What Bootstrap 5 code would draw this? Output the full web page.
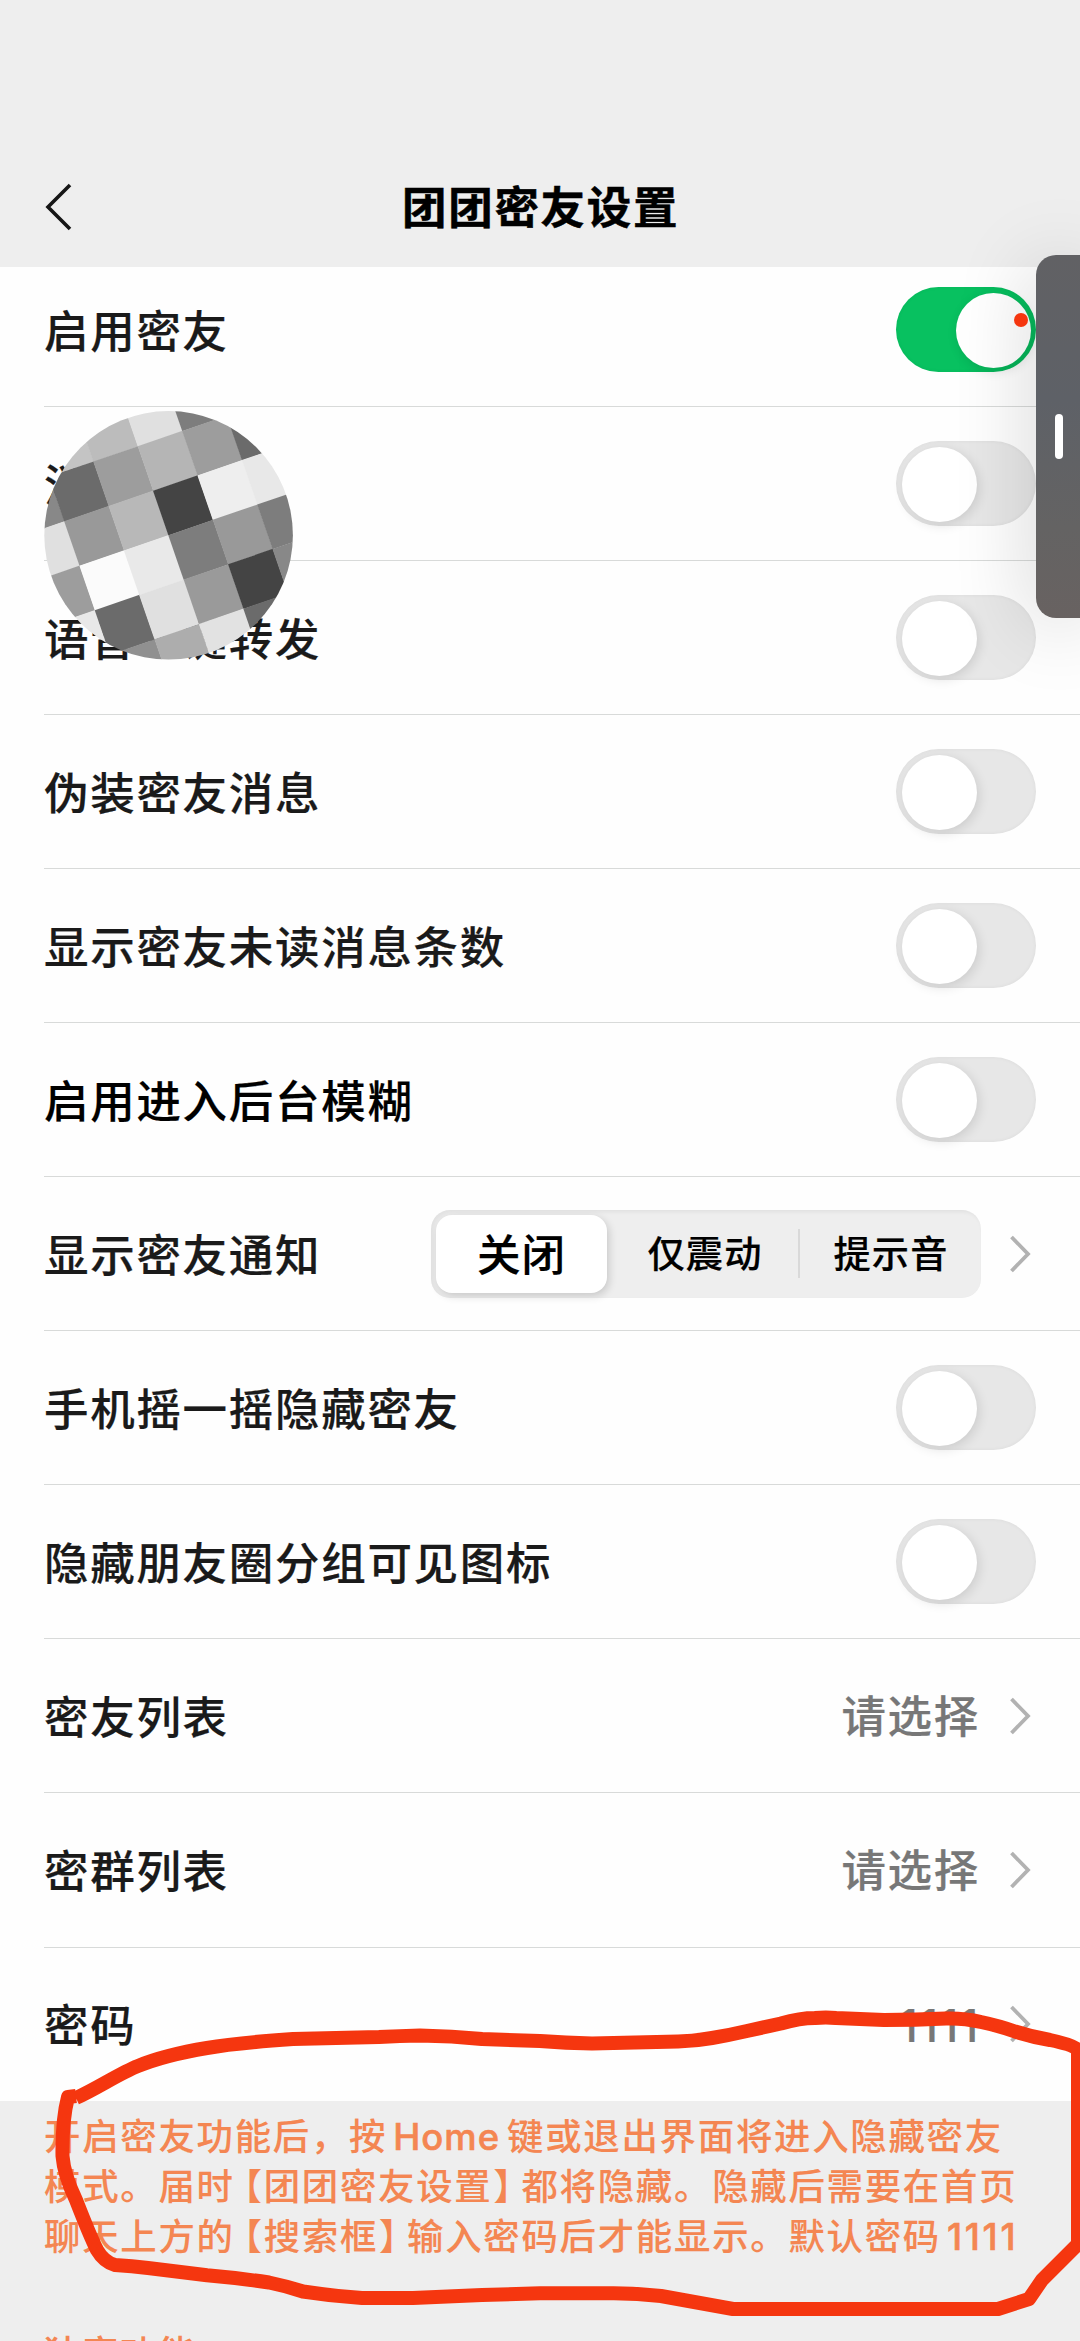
<!DOCTYPE html>
<html lang="zh-CN">
<head>
<meta charset="utf-8">
<meta name="viewport" content="width=device-width, initial-scale=1">
<title>团团密友设置</title>
<link href="https://cdn.jsdelivr.net/npm/bootstrap@5.3.0/dist/css/bootstrap.min.css" rel="stylesheet">
<style>
body{font-family:Inter,"Noto Sans CJK SC",sans-serif;background:#eee;color:#1a1a1a}
.screen{width:1080px;height:2341px;background:#eee}
.topbar{height:267px;background:#eee;padding:148px 44px 0;z-index:1}
.topbar h1{font-size:44.5px;letter-spacing:1.7px;font-weight:700;color:#000;line-height:121px;padding-left:330px;-webkit-text-stroke:.5px}
.topbar .back{margin-top:35px}
.settings{margin-top:-14px;padding-left:44px;background:#fefefe;height:1848px}
.setting{height:154.05px;padding-right:44px;border-bottom:1.5px solid #d8dad9;font-size:44.5px;letter-spacing:1.7px;line-height:60px;font-weight:500;-webkit-text-stroke:.2px}
.setting:last-child{border-color:transparent}
.setting>span:first-child{padding-top:4px}
.pick{color:#777;padding:3px 6px 0 0}
.toggle{width:140px;height:85px;border-radius:43px;background:#e7e7e7;padding:5.5px;box-shadow:inset 0 0 4px rgba(0,0,0,.05)}
.toggle i{width:75px;height:75px;border-radius:50%;background:#fff;box-shadow:2px 3px 12px rgba(0,0,0,.12)}
.toggle.on{background:#08c160;justify-content:flex-end}
.seg{width:550px;height:88px;border-radius:19px;background:#eee;padding:5px;margin-right:29px;box-shadow:inset 2px 2px 4px rgba(0,0,0,.06);font-size:37.2px;letter-spacing:1.1px;color:#000}
.seg .chosen{width:171px;height:78px;border-radius:16px;background:#fff;box-shadow:2px 3px 8px rgba(0,0,0,.16);font-size:43.5px;letter-spacing:1px;padding-top:3px}
.seg .rule{width:2px;height:49px;background:#d9d9d9}
.seg .opt{padding-top:2px}
.seg .vib{width:191px;padding-left:5px}
.seg .snd{width:176px;padding-left:6px}
.tip{padding:11px 0 0 44px;color:#f48652;font-size:36.4px;letter-spacing:1.75px;line-height:50px;font-weight:500;-webkit-text-stroke:.1px}
.tip div{white-space:nowrap}
.tip .lb,.tip .rb{font-feature-settings:"halt"}
.tip .lb{margin-left:9px}
.tip .rb{margin-left:1px;margin-right:8px}
.tip .latin{margin:0 7px 0 6px;letter-spacing:1px;-webkit-text-stroke:.6px}
.tip .digits{margin-left:6px;letter-spacing:2.7px;-webkit-text-stroke:.6px}
.next{padding:67px 0 0 44px}
.drawer{left:1036px;top:254.500px;width:44px;height:363px;border-radius:20px 0 0 20px;background:linear-gradient(#616164,#5e6167 40%,#646363 75%,#686261);box-shadow:0 8px 80px rgba(0,0,0,.2);padding-left:19px;z-index:2}
.drawer i{width:8px;height:45px;border-radius:4px;background:#fff;margin-top:1px}
.overlay{z-index:3;pointer-events:none}
</style>
</head>
<body>
<main class="screen position-relative overflow-hidden">
<header class="topbar position-relative d-flex align-items-start">
<svg class="back" width="28" height="48" viewBox="0 0 28 48" fill="none" stroke="#161616" stroke-width="3.6"><path d="M26 2 4 24 26 46"/></svg>
<h1 class="m-0">团团密友设置</h1>
</header>
<section class="settings">
<div class="setting d-flex align-items-center justify-content-between"><span>启用密友</span><span class="toggle on d-flex"><i></i></span></div>
<div class="setting d-flex align-items-center justify-content-between"><span>消</span><span class="toggle d-flex"><i></i></span></div>
<div class="setting d-flex align-items-center justify-content-between"><span>语音一键转发</span><span class="toggle d-flex"><i></i></span></div>
<div class="setting d-flex align-items-center justify-content-between"><span>伪装密友消息</span><span class="toggle d-flex"><i></i></span></div>
<div class="setting d-flex align-items-center justify-content-between"><span>显示密友未读消息条数</span><span class="toggle d-flex"><i></i></span></div>
<div class="setting d-flex align-items-center justify-content-between"><span class="text-black">启用进入后台模糊</span><span class="toggle d-flex"><i></i></span></div>
<div class="setting d-flex align-items-center"><span class="me-auto">显示密友通知</span>
<div class="seg d-flex align-items-center"><span class="chosen d-flex align-items-center justify-content-center">关闭</span><span class="opt vib text-center">仅震动</span><span class="rule"></span><span class="opt snd text-center">提示音</span></div>
<svg class="me-1" width="22" height="40" viewBox="0 0 22 40" fill="none" stroke="#b2b2b2" stroke-width="3.8"><path d="M1.500 3 18 20 1.500 37"/></svg></div>
<div class="setting d-flex align-items-center justify-content-between"><span>手机摇一摇隐藏密友</span><span class="toggle d-flex"><i></i></span></div>
<div class="setting d-flex align-items-center justify-content-between"><span>隐藏朋友圈分组可见图标</span><span class="toggle d-flex"><i></i></span></div>
<div class="setting d-flex align-items-center"><span class="me-auto">密友列表</span><span class="pick me-4">请选择</span><svg class="me-1" width="22" height="40" viewBox="0 0 22 40" fill="none" stroke="#b2b2b2" stroke-width="3.8"><path d="M1.500 3 18 20 1.500 37"/></svg></div>
<div class="setting d-flex align-items-center"><span class="me-auto">密群列表</span><span class="pick me-4">请选择</span><svg class="me-1" width="22" height="40" viewBox="0 0 22 40" fill="none" stroke="#b2b2b2" stroke-width="3.8"><path d="M1.500 3 18 20 1.500 37"/></svg></div>
<div class="setting d-flex align-items-center"><span class="me-auto">密码</span><span class="pick me-4">1111</span><svg class="me-1" width="22" height="40" viewBox="0 0 22 40" fill="none" stroke="#b2b2b2" stroke-width="3.8"><path d="M1.500 3 18 20 1.500 37"/></svg></div>
</section>
<section class="tip">
<div>开启密友功能后，按<span class="latin">Home</span>键或退出界面将进入隐藏密友</div>
<div>模式。届时<span class="lb">【</span>团团密友设置<span class="rb">】</span>都将隐藏。隐藏后需要在首页</div>
<div>聊天上方的<span class="lb">【</span>搜索框<span class="rb">】</span>输入密码后才能显示。默认密码<span class="digits">1111</span></div>
</section>
<section class="tip next"><div>独家功能</div></section>
<aside class="drawer position-absolute d-flex align-items-start flex-column justify-content-center"><i></i></aside>
<svg class="overlay position-absolute top-0 start-0" width="1080" height="2341" viewBox="0 0 1080 2341">
<defs><clipPath id="face"><circle cx="168.6" cy="535.3" r="124.3"/></clipPath></defs>
<g clip-path="url(#face)"><g id="mosaic" transform="translate(153 490.7) rotate(-19)"></g></g>
<circle cx="1021" cy="320" r="7" fill="#f5360f"/>
<path fill="none" stroke="#f5360f" stroke-width="14" stroke-linejoin="round" d="M76 2098C98 2088 120 2073 138 2066C160 2057 183 2052 207 2048C235 2043 264 2041 293 2039L379 2037Q400 2036 420 2035.500Q452 2036 482 2039L540 2041Q566 2043 592 2043.500L678 2041.500Q695 2041 712 2038Q730 2035 747 2031L781 2023.500Q800 2018 815 2018Q826 2017 836 2018L884 2020Q916 2020 946 2018.500Q964 2018 981 2022Q1000 2026 1015 2031.500Q1032 2037 1050 2040Q1074 2045 1078 2050L1078 2244L1042 2280L1029 2299L998 2309H733L661 2296Q635 2293 609 2293.300H540L482 2295L413 2298H362Q332 2296 303 2291.500Q286 2286 269 2282.500Q238 2278 207 2275.300L148 2268Q132 2266 115 2265Q104 2262 97 2250C90 2236 83 2218 76 2200Q64 2175 62.500 2156Q62 2120 68 2097L76 2096"/>
</svg>
</main>
<script src="https://cdn.jsdelivr.net/npm/bootstrap@5.3.0/dist/js/bootstrap.bundle.min.js"></script>
<script>
/* Grey tiles of the avatar mask, one string per row, columns -3 to 2 */
const tiles=[
['#c4c4c4','#c4c4c4','#bcbcbc','#e0e0e0','#7d7d7d','#6b6b6b'],
['#888','#6b6b6b','#9d9d9d','#b5b5b5','#9d9d9d','#6b6b6b'],
['#e0e0e0','#999','#b8b8b8','#444','#eee','#e8e8e8'],
['#9d9d9d','#fbfbfb','#e9e9e9','#7d7d7d','#999','#7d7d7d'],
['#e8e8e8','#6b6b6b','#e0e0e0','#9a9a9a','#444','#888'],
['#909090','#909090','#adadad','#e2e2e2','#6b6b6b','#6b6b6b']];
const g=document.getElementById('mosaic'),s=47;
tiles.forEach((row,j)=>row.forEach((c,i)=>{
const r=document.createElementNS('http://www.w3.org/2000/svg','rect');
r.setAttribute('x',(i-3)*s);r.setAttribute('y',(j-2)*s);
r.setAttribute('width',s+.4);r.setAttribute('height',s+.4);r.setAttribute('fill',c);
g.appendChild(r);}));
</script>
</body>
</html>
